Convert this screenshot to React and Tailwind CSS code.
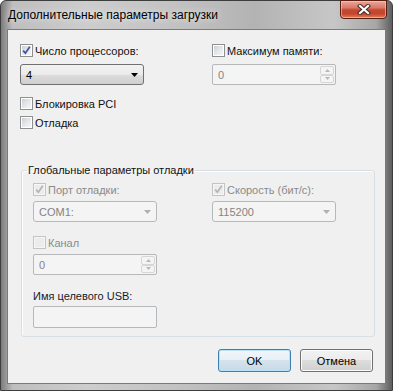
import React from 'react';

function Check({ label, checked, disabled, className = '' }) {
  return (
    <label className={`flex items-center h-[13px] gap-[2px] ${className}`}>
      <span
        className={`w-[13px] h-[13px] border p-px shrink-0 ${
          disabled ? 'border-[#c4c4c4] bg-[#f6f6f6]' : 'border-[#8e8f8f] bg-white'
        }`}
      >
        <span
          className={`flex w-[9px] h-[9px] ${
            disabled
              ? 'bg-[#ececec]'
              : 'bg-[linear-gradient(135deg,#cdd1d7_0%,#e4e6e9_50%,#f7f7f7_100%)]'
          }`}
        >
          {checked && (
            <svg width="9" height="9" viewBox="0 0 9 9">
              <path
                d="M1.2 4.6 L3.4 7.2 L7.8 0.8"
                fill="none"
                stroke={disabled ? '#b4b4b4' : '#3b53a0'}
                strokeWidth="1.7"
              />
            </svg>
          )}
        </span>
      </span>
      <span className={disabled ? 'text-[#8a8a8a]' : 'text-[#111]'}>{label}</span>
    </label>
  );
}

function Arrow({ color }) {
  return (
    <svg width="7" height="4" viewBox="0 0 7 4">
      <polygon points="0,0 7,0 3.5,4" fill={color} />
    </svg>
  );
}

function Combo({ value, disabled, className = '' }) {
  return (
    <div
      className={`w-[124px] h-[21px] rounded-[3px] border flex items-center justify-between pl-[5px] pr-[5px] ${
        disabled
          ? 'border-[#b5b9bc] bg-[#f4f4f4] text-[#838383]'
          : 'border-[#707070] bg-[linear-gradient(180deg,#f2f2f2_0%,#ebebeb_50%,#dddddd_50%,#cfcfcf_100%)] text-black'
      } ${className}`}
    >
      <span>{value}</span>
      <Arrow color={disabled ? '#b0b0b0' : '#000'} />
    </div>
  );
}

function SpinBtn({ up }) {
  return (
    <span className="flex-1 border border-[#d6d6d6] rounded-[2px] bg-[#f4f4f4] flex items-center justify-center">
      <svg width="5" height="3" viewBox="0 0 5 3">
        <polygon points={up ? '0,3 5,3 2.5,0' : '0,0 5,0 2.5,3'} fill="#b8b8b8" />
      </svg>
    </span>
  );
}

function Spin({ className = '' }) {
  return (
    <div
      className={`w-[124px] h-[21px] border border-[#b5b9bc] rounded-[2px] bg-[#f4f4f4] flex justify-between pl-[5px] ${className}`}
    >
      <span className="self-center text-[#838383]">0</span>
      <div className="flex flex-col w-[16px] p-px">
        <SpinBtn up />
        <SpinBtn />
      </div>
    </div>
  );
}

function Button({ children, primary }) {
  return (
    <button
      className={`w-[73px] h-[23px] rounded-[3px] border text-black ${
        primary
          ? 'border-[#3c7fb1] shadow-[inset_0_0_0_1px_#b7e3f8] bg-[linear-gradient(180deg,#f1f6fa_0%,#e7eff6_50%,#d5e3ee_50%,#c8d9e7_100%)]'
          : 'border-[#707070] shadow-[inset_0_0_0_1px_#fcfcfc] bg-[linear-gradient(180deg,#f2f2f2_0%,#ebebeb_50%,#dddddd_50%,#cfcfcf_100%)]'
      }`}
    >
      {children}
    </button>
  );
}

export default function App() {
  return (
    <div className="w-[393px] h-[391px] flex flex-col border border-[#3d3d3d] rounded-t-[6px] bg-[linear-gradient(90deg,#7c7c7c_0%,#bebebe_3%,#cdcdcd_22%,#c2c2c2_45%,#b3b3b3_65%,#c7c7c7_85%,#a6a6a6_96%,#5e5e5e_100%)] font-['Liberation_Sans','Noto_Sans',sans-serif] text-[11px] leading-[14px] select-none">
      {/* title bar */}
      <div className="h-[28px] flex items-start justify-between">
        <div className="pl-[7px] pt-[7px] text-[12px] text-black [text-shadow:0_0_6px_rgba(255,255,255,0.9)]">
          Дополнительные параметры загрузки
        </div>
        <div className="mr-[5px] w-[47px] h-[19px] -mt-px rounded-b-[4px] border border-[#5a1d12] shadow-[inset_0_0_0_1px_rgba(255,210,200,0.55)] bg-[linear-gradient(180deg,#eaa698_0%,#d9796a_40%,#c24a32_52%,#c4452b_75%,#df8258_100%)] flex items-center justify-center">
          <svg width="14" height="11" viewBox="0 0 14 11">
            <path d="M3 2 L11 9 M11 2 L3 9" stroke="#4a2a25" strokeWidth="4.2" strokeLinecap="square" />
            <path d="M3 2 L11 9 M11 2 L3 9" stroke="#ffffff" strokeWidth="2.2" strokeLinecap="square" />
          </svg>
        </div>
      </div>

      {/* client area */}
      <div className="mx-[6px] mb-[6px] h-[355px] border border-[#7b7b7b] bg-[#f0f0f0] flex flex-col pt-[14px] pl-[12px] pr-[12px]">
        <div className="flex">
          <div className="w-[192px] flex flex-col">
            <Check label="Число процессоров:" checked />
            <Combo value="4" className="mt-[7px]" />
            <Check label="Блокировка PCI" className="mt-[12px]" />
            <Check label="Отладка" className="mt-[6px]" />
          </div>
          <div className="flex flex-col">
            <Check label="Максимум памяти:" />
            <Spin className="mt-[7px]" />
          </div>
        </div>

        <fieldset className="mt-[34px] ml-px w-[354px] border border-[#d5dfe5] rounded-[3px] shadow-[inset_1px_1px_0_#ffffff]">
          <legend className="ml-[5px] px-px text-[#111]">Глобальные параметры отладки</legend>
          <div className="flex pl-[11px] pt-[6px] pb-[8px]">
            <div className="w-[179px] flex flex-col">
              <Check label="Порт отладки:" checked disabled />
              <Combo value="COM1:" disabled className="mt-[5px]" />
              <Check label="Канал" disabled className="mt-[14px]" />
              <Spin className="mt-[5px]" />
              <div className="mt-[14px] text-[#1a1a2a]">Имя целевого USB:</div>
              <div className="mt-[3px] w-[124px] h-[22px] border border-[#b5b9bc] rounded-[2px] bg-[#f4f4f4]" />
            </div>
            <div className="flex flex-col">
              <Check label="Скорость (бит/с):" checked disabled />
              <Combo value="115200" disabled className="mt-[5px]" />
            </div>
          </div>
        </fieldset>

        <div className="mt-[12px] flex justify-end gap-[9px]">
          <Button primary>OK</Button>
          <Button>Отмена</Button>
        </div>
      </div>
    </div>
  );
}
